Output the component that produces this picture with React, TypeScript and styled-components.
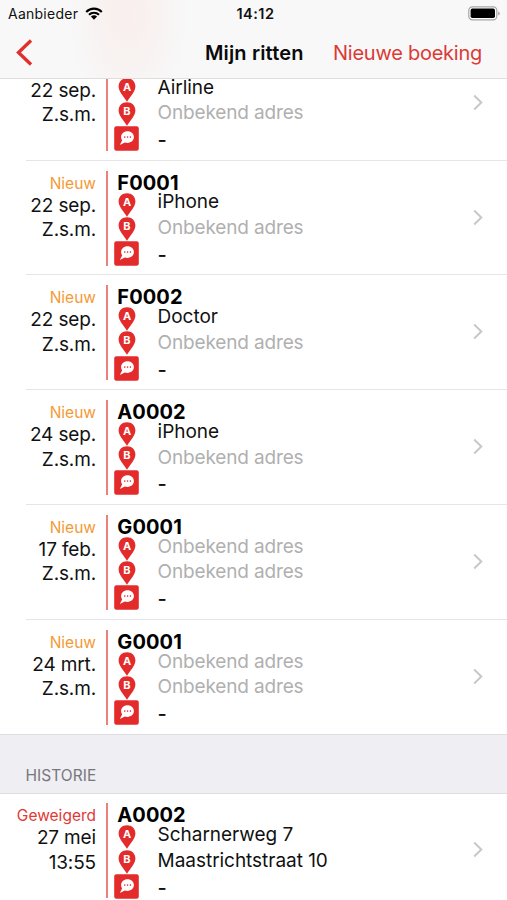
import React from 'react';
import styled, { createGlobalStyle } from 'styled-components';

const GlobalStyle = createGlobalStyle`
  *, *::before, *::after { box-sizing: border-box; }
  body {
    margin: 0;
    background: #fff;
    color: #111;
    font-family: Inter, "Liberation Sans", sans-serif;
    -webkit-font-smoothing: antialiased;
  }
`;

const Screen = styled.main`
  width: 507px;
  height: 900px;
  overflow: hidden;
  display: flex;
  flex-direction: column;
  background: #fff;
`;

const Header = styled.header`
  position: relative;
  z-index: 1;
  flex: none;
  height: 79px;
  border-bottom: 1px solid #dedede;
  background:
    radial-gradient(ellipse 60px 100px at 128px 15px, #f9efee 0%, #f8f2f1 45%, rgba(248, 248, 248, 0) 100%),
    #f8f8f8;
`;

const StatusBar = styled.div`
  height: 27px;
  padding: 0 7px 0 8px;
  display: grid;
  grid-template-columns: 1fr auto 1fr;
  align-items: center;
  font-size: 14px;
  line-height: 27px;
`;

const Carrier = styled.span`
  display: flex;
  align-items: center;
  gap: 7px;
  letter-spacing: 0.25px;
`;

const Clock = styled.span`
  margin-left: 3px;
  font-weight: 600;
  font-size: 14.5px;
  letter-spacing: 0.5px;
`;

const BatterySlot = styled.span`
  display: flex;
  justify-content: flex-end;
`;

const NavBar = styled.nav`
  height: 51px;
  padding: 0 25px 0 16px;
  display: grid;
  grid-template-columns: 189px auto 1fr;
  align-items: center;
  line-height: 26px;
`;

const BackButton = styled.button`
  justify-self: start;
  display: flex;
  border: 0;
  padding: 0;
  background: none;
`;

const NavTitle = styled.h1`
  margin: 0;
  font-size: 20px;
  font-weight: 600;
  letter-spacing: 0.15px;
  white-space: nowrap;
  color: #0a0a0a;
`;

const NavAction = styled.button`
  justify-self: end;
  border: 0;
  padding: 0;
  background: none;
  font: inherit;
  font-size: 20px;
  letter-spacing: -0.25px;
  white-space: nowrap;
  color: #dc3a36;
`;

const List = styled.div`
  flex: 1;
  min-height: 0;
`;

const RideGroup = styled.section<{ $scrolled?: boolean }>`
  margin-top: ${(p) => (p.$scrolled ? '-33.3px' : '-1px')};
`;

const Row = styled.article`
  height: 114.8px;
  padding: 10px 24.5px 0 0;
  display: grid;
  grid-template-columns: 96px 11.5px 1fr 10px;
  background: linear-gradient(#e6e6e8, #e6e6e8) 26px 100% / 100% 1px no-repeat;

  &:last-child { background: none; }
`;

const When = styled.div`
  display: flex;
  flex-direction: column;
  align-items: flex-end;
  white-space: nowrap;
  font-size: 19px;
  line-height: 24.4px;
  letter-spacing: -0.15px;
`;

const Status = styled.span<{ $refused?: boolean }>`
  margin-top: 2px;
  height: 21px;
  font-size: 15.5px;
  line-height: 21px;
  letter-spacing: 0;
  color: ${(p) => (p.$refused ? '#e03a36' : '#f39a35')};
`;

const Divider = styled.div`
  justify-self: end;
  width: 2px;
  height: 95px;
  background: #ec807d;
`;

const Details = styled.div`
  padding-left: 6.8px;
`;

const Code = styled.h2`
  margin: 0 0 0 3px;
  height: 22px;
  font-size: 20px;
  line-height: 25.6px;
  font-weight: 700;
  letter-spacing: 0.1px;
  color: #000;
`;

const Route = styled.div`
  display: grid;
  grid-template-columns: 25px 1fr;
  column-gap: 18.3px;
`;

const Icons = styled.div`
  display: flex;
  flex-direction: column;
  align-items: center;

  svg { flex: none; display: block; }
`;

const Stops = styled.div`
  margin-top: -3.2px;
  font-size: 19px;
  line-height: 25.7px;
  letter-spacing: -0.12px;
  white-space: nowrap;
`;

const Stop = styled.div<{ $unknown?: boolean }>`
  color: ${(p) => (p.$unknown ? '#b0b0b0' : '#111')};
  letter-spacing: ${(p) => (p.$unknown ? '-0.15px' : '-0.04px')};
`;

const Remark = styled.div`
  padding-top: 2px;
  font-size: 20px;
  font-weight: 500;
`;

const ChevronSlot = styled.div`
  padding-top: 38px;
`;

const SectionHeader = styled.h3`
  margin: 0;
  height: 60px;
  padding: 30px 0 0 25.5px;
  border-top: 1px solid #dedee2;
  border-bottom: 1px solid #dedee2;
  background: #efeef3;
  font-size: 15.5px;
  font-weight: 400;
  line-height: 22px;
  letter-spacing: 0.05px;
  color: #77777c;
`;

const PinLabel = styled.text`
  font: 700 11px Inter, sans-serif;
  text-anchor: middle;
  fill: #fff;
`;

const Wifi = () => (
  <svg width="18" height="13" viewBox="0 0 18 13">
    <g fill="none" stroke="#000" strokeWidth="2.1">
      <path d="M1.2 4.9a11 11 0 0 1 15.6 0" />
      <path d="M4 7.8a7 7 0 0 1 10 0" />
    </g>
    <path d="M5.9 9.6a4.4 4.4 0 0 1 6.2 0L9 12.7z" />
  </svg>
);

const Battery = () => (
  <svg width="32" height="15" viewBox="0 0 32 15">
    <rect x="0.8" y="0.8" width="28" height="13" rx="3.6" fill="#fff" stroke="#a5a5a5" strokeWidth="1.2" />
    <rect x="2.6" y="2.6" width="24.4" height="9.4" rx="1.8" />
    <path d="M30.2 5.2q1.6.7 1.6 2.2t-1.6 2.2z" fill="#a5a5a5" />
  </svg>
);

const Back = () => (
  <svg width="17" height="27" viewBox="0 0 17 27">
    <path d="M15 1.5 2.5 13.5 15 25.5" fill="none" stroke="#e02f2c" strokeWidth="3.3" />
  </svg>
);

const Pin = ({ label }: { label: string }) => (
  <svg width="18" height="24.2" viewBox="0 0 18 24.2">
    <path d="M9 .3c-4.9 0-8.4 3.5-8.4 8.1 0 5 4.9 9.6 8.4 15.3 3.5-5.7 8.4-10.3 8.4-15.3 0-4.6-3.5-8.1-8.4-8.1z" fill="#e32b2b" />
    <PinLabel x="9" y="13.3">{label}</PinLabel>
  </svg>
);

const Note = () => (
  <svg width="25" height="25" viewBox="0 0 25 25">
    <rect x="0.2" y="0.3" width="24.6" height="24.4" rx="2.2" fill="#e32b2b" />
    <path d="M13.5 5.3c3.7 0 6.4 2.4 6.4 5.8s-2.7 5.8-6.4 5.8c-1 0-1.9-.2-2.7-.5L5.8 18.9l2.3-4.5c-.7-.9-1-2-1-3.3 0-3.4 2.7-5.8 6.4-5.8z" fill="#fff" />
    <g fill="#e32b2b">
      <circle cx="10.8" cy="11.1" r=".8" />
      <circle cx="13.6" cy="11.1" r=".8" />
      <circle cx="16.4" cy="11.1" r=".8" />
    </g>
  </svg>
);

const Chevron = () => (
  <svg width="10" height="17" viewBox="0 0 10 17">
    <path d="M1.2 1.5 8.3 8.5 1.2 15.5" fill="none" stroke="#c8c8cc" strokeWidth="2" />
  </svg>
);

type Ride = {
  code?: string;
  status?: string;
  refused?: boolean;
  day: string;
  time: string;
  from?: string;
  to?: string;
};

const upcoming: Ride[] = [
  { day: '22 sep.', time: 'Z.s.m.', from: 'Airline' },
  { code: 'F0001', status: 'Nieuw', day: '22 sep.', time: 'Z.s.m.', from: 'iPhone' },
  { code: 'F0002', status: 'Nieuw', day: '22 sep.', time: 'Z.s.m.', from: 'Doctor' },
  { code: 'A0002', status: 'Nieuw', day: '24 sep.', time: 'Z.s.m.', from: 'iPhone' },
  { code: 'G0001', status: 'Nieuw', day: '17 feb.', time: 'Z.s.m.' },
  { code: 'G0001', status: 'Nieuw', day: '24 mrt.', time: 'Z.s.m.' },
];

const history: Ride[] = [
  {
    code: 'A0002',
    status: 'Geweigerd',
    refused: true,
    day: '27 mei',
    time: '13:55',
    from: 'Scharnerweg 7',
    to: 'Maastrichtstraat 10',
  },
];

const RideRow = ({ ride }: { ride: Ride }) => (
  <Row>
    <When>
      <Status $refused={ride.refused}>{ride.status}</Status>
      <span>{ride.day}</span>
      <span>{ride.time}</span>
    </When>
    <Divider />
    <Details>
      <Code>{ride.code}</Code>
      <Route>
        <Icons>
          <Pin label="A" />
          <Pin label="B" />
          <Note />
        </Icons>
        <Stops>
          <Stop $unknown={!ride.from}>{ride.from ?? 'Onbekend adres'}</Stop>
          <Stop $unknown={!ride.to}>{ride.to ?? 'Onbekend adres'}</Stop>
          <Remark>-</Remark>
        </Stops>
      </Route>
    </Details>
    <ChevronSlot>
      <Chevron />
    </ChevronSlot>
  </Row>
);

export default function App() {
  return (
    <Screen>
      <GlobalStyle />
      <Header>
        <StatusBar>
          <Carrier>
            Aanbieder
            <Wifi />
          </Carrier>
          <Clock>14:12</Clock>
          <BatterySlot>
            <Battery />
          </BatterySlot>
        </StatusBar>
        <NavBar>
          <BackButton aria-label="Terug">
            <Back />
          </BackButton>
          <NavTitle>Mijn ritten</NavTitle>
          <NavAction>Nieuwe boeking</NavAction>
        </NavBar>
      </Header>
      <List>
        <RideGroup $scrolled>
          {upcoming.map((ride, i) => (
            <RideRow key={i} ride={ride} />
          ))}
        </RideGroup>
        <SectionHeader>HISTORIE</SectionHeader>
        <RideGroup>
          {history.map((ride, i) => (
            <RideRow key={i} ride={ride} />
          ))}
        </RideGroup>
      </List>
    </Screen>
  );
}
